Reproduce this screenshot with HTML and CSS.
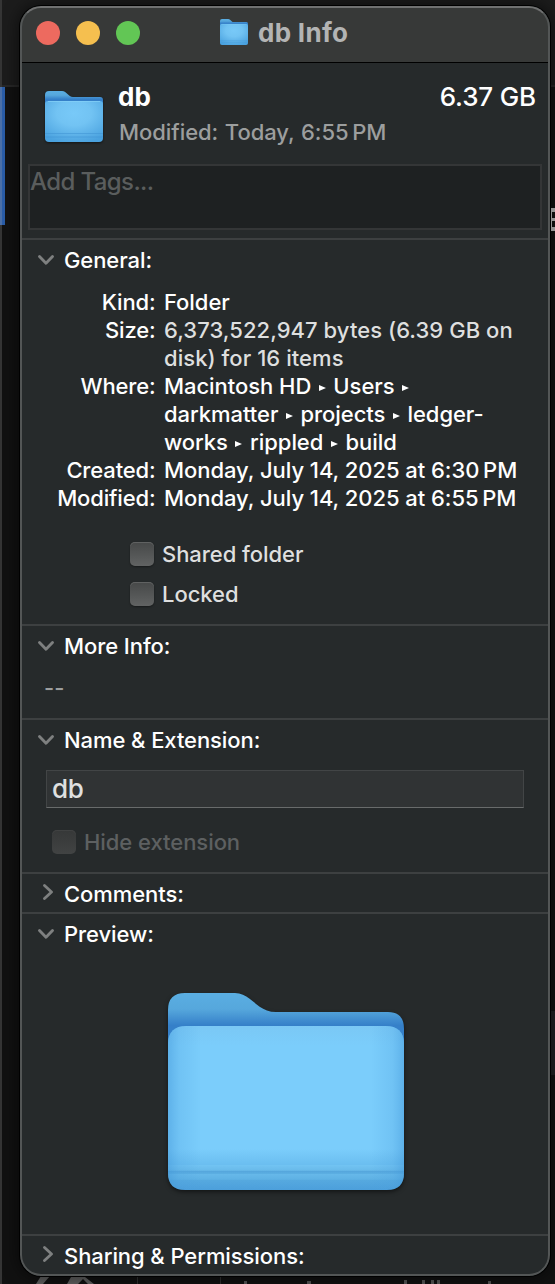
FILE: index.html
```html
<!DOCTYPE html>
<html lang="en">
<head>
<meta charset="utf-8">
<title>db Info</title>
<link rel="stylesheet" href="styles.css">
</head>
<body>
<svg class="defs" width="0" height="0">
  <defs>
    <linearGradient id="back" x1="0" y1="0" x2="0" y2="1">
      <stop offset="0" stop-color="#5aaee2"/><stop offset=".09" stop-color="#56a7dc"/><stop offset=".18" stop-color="#3580c9"/><stop offset="1" stop-color="#3580c9"/>
    </linearGradient>
    <linearGradient id="front" x1="0" y1="0" x2="0" y2="1">
      <stop offset="0" stop-color="#7ac8f5"/><stop offset=".12" stop-color="#7bcdfb"/><stop offset=".75" stop-color="#7bcdfb"/><stop offset=".845" stop-color="#6bbef0"/>
      <stop offset=".85" stop-color="#71c3f2"/><stop offset=".88" stop-color="#69baea"/><stop offset=".885" stop-color="#55a6dc"/><stop offset=".9" stop-color="#5baee2"/><stop offset=".905" stop-color="#66b8e9"/><stop offset=".935" stop-color="#5eb1e4"/><stop offset=".94" stop-color="#56a9df"/><stop offset="1" stop-color="#4c9fdb"/>
    </linearGradient>
    <linearGradient id="sides" x1="0" y1="0" x2="1" y2="0">
      <stop offset="0" stop-color="#3f95d8" stop-opacity=".5"/><stop offset=".05" stop-color="#4b9fde" stop-opacity=".22"/><stop offset=".14" stop-color="#4b9fde" stop-opacity="0"/><stop offset=".86" stop-color="#4b9fde" stop-opacity="0"/><stop offset=".95" stop-color="#4b9fde" stop-opacity=".22"/><stop offset="1" stop-color="#3f95d8" stop-opacity=".5"/>
    </linearGradient>
    <radialGradient id="small-front" cx=".5" cy=".3" r=".75">
      <stop offset="0" stop-color="#78c9f8"/><stop offset=".4" stop-color="#72c3f3"/><stop offset="1" stop-color="#4aa2df"/>
    </radialGradient>
    <symbol id="folder" viewBox="0 0 236 197" preserveAspectRatio="none">
      <path fill="url(#back)" d="M0 17Q0 0 17 0H67C83 0 89 19 108 19H220Q236 19 236 36V180H0Z"/>
      <path fill="url(#front)" d="M0 50Q1 33 18 33H218Q235 33 236 50V180Q236 197 219 197H17Q0 197 0 180Z"/>
      <path fill="url(#sides)" d="M0 50Q1 33 18 33H218Q235 33 236 50V180Q236 197 219 197H17Q0 197 0 180Z"/>
    </symbol>
    <symbol id="folder-small" viewBox="0 0 58 51" preserveAspectRatio="none">
      <path fill="url(#back)" d="M0 4Q0 0 4 0H17C22 0 23 6 28 6H55Q58 6 58 9V46H0Z"/>
      <path fill="url(#small-front)" d="M0 13Q0 10 3 10H55Q58 10 58 13V47Q58 51 54 51H4Q0 51 0 47Z"/>
      <path stroke="#86d1f8" stroke-opacity=".7" d="M3 10.500H55"/>
      <path stroke="#3f93d3" stroke-opacity=".55" d="M0 42.500H58M0 46H58"/>
    </symbol>
    <symbol id="down" viewBox="0 0 16 10"><path d="M1.500 1.500 8 8.300l6.500-6.800"/></symbol>
    <symbol id="right" viewBox="0 0 10 16"><path d="M1.500 1.500 8.500 8l-7 6.500"/></symbol>
  </defs>
</svg>
<div class="desktop">
  <div class="behind behind-top"></div>
  <div class="behind behind-edge"></div>
  <div class="behind behind-blue"></div>
  <div class="behind behind-scroll"></div>
  <svg class="behind behind-bottom" width="555" height="9" viewBox="0 0 555 9"><path fill="#606060" d="M36 9l5-8h9l-7 8zM67 9l4-7 8-1 6 1 9 7h-6l-5-5-5 5z"/><path stroke="#303030" d="M137.500 0v9M220.500 0v9"/><path fill="#555" d="M244 6h3v3h-3zM307 6h4v3h-4zM404 5h3v4h-3zM422 5h3v4h-3zM431 5h3v4h-3zM437 5h3v4h-3zM488 6h3v3h-3z"/></svg>
  <main class="window">
    <header class="titlebar">
      <span class="light red"></span><span class="light yellow"></span><span class="light green"></span>
      <svg class="title-icon"><use href="#folder-small"/></svg>
      <h1 class="title">db Info</h1>
    </header>
    <div class="summary">
      <svg class="summary-icon"><use href="#folder-small"/></svg>
      <div class="summary-text">
        <div class="summary-row"><strong class="name">db</strong><span class="total">6.37 GB</span></div>
        <div class="modified">Modified: Today, 6:55&#8239;PM</div>
      </div>
    </div>
    <div class="tags">Add Tags...</div>

    <section class="section general">
      <h2 class="heading"><svg class="chev down"><use href="#down"/></svg>General:</h2>
      <dl class="facts">
        <dt>Kind:</dt><dd class="kind">Folder</dd>
        <dt>Size:</dt><dd class="soft">6,373,522,947 bytes (6.39 GB on<br>disk) for 16 items</dd>
        <dt>Where:</dt><dd class="path">Macintosh HD <i class="tri"></i> Users <i class="tri"></i><br>darkmatter <i class="tri"></i> projects <i class="tri"></i> ledger-<br>works <i class="tri"></i> rippled <i class="tri"></i> build</dd>
        <dt>Created:</dt><dd class="date">Monday, July 14, 2025 at 6:30&#8239;PM</dd>
        <dt>Modified:</dt><dd class="date">Monday, July 14, 2025 at 6:55&#8239;PM</dd>
      </dl>
      <div class="checks">
        <label class="check"><span class="box"></span>Shared folder</label>
        <label class="check"><span class="box"></span>Locked</label>
      </div>
    </section>
    <section class="section more">
      <h2 class="heading"><svg class="chev down"><use href="#down"/></svg>More Info:</h2>
      <div class="none">--</div>
    </section>
    <section class="section extension">
      <h2 class="heading"><svg class="chev down"><use href="#down"/></svg>Name &amp; Extension:</h2>
      <div class="field">db</div>
      <label class="check disabled"><span class="box"></span>Hide extension</label>
    </section>
    <section class="section comments">
      <h2 class="heading"><svg class="chev right"><use href="#right"/></svg>Comments:</h2>
    </section>
    <section class="section preview">
      <h2 class="heading"><svg class="chev down"><use href="#down"/></svg>Preview:</h2>
      <svg class="preview-icon"><use href="#folder"/></svg>
    </section>
    <section class="section sharing">
      <h2 class="heading"><svg class="chev right"><use href="#right"/></svg>Sharing &amp; Permissions:</h2>
    </section>
  </main>
  <svg class="behind behind-list" width="5" height="23"><path fill="#929292" d="M0 0h5v4H0zM0 10h5v3H0zM0 19h5v4H0zM0 0h1v23H0z"/></svg>
</div>
</body>
</html>
```
FILE: styles.css
```css
* { box-sizing: border-box; }
body { margin: 0; background: #111; font-family: Inter, "Liberation Sans", sans-serif; font-size: 22px; line-height: 28px; color: #fff; }
.defs { position: absolute; }
.desktop { position: relative; width: 555px; height: 1284px; padding: 6px 0 0 20px; overflow: hidden; background: #111; }

.behind { position: absolute; }
.behind-top { left: 0; top: 0; width: 555px; height: 87px; background: #1c1c1c; border-bottom: 2px solid #272727; }
.behind-edge { left: 0; top: 0; width: 2px; height: 1284px; background: #353535; }
.behind-blue { left: 0; top: 87px; width: 5px; height: 138px; background: #2a5da8; border-left: 2px solid #4c70a8; }
.behind-list { left: 551px; top: 208px; }
.behind-scroll { left: 550px; top: 1011px; width: 5px; height: 64px; background: #222225; }
.behind-bottom { left: 0; top: 1275px; }

.window { position: relative; width: 530px; height: 1270px; border-radius: 21px; overflow: hidden; background: #262a2b; box-shadow: 0 0 0 1px #000, 0 0 16px 2px rgba(0,0,0,.55); }
.window::after { content: ""; position: absolute; inset: 0; border: 2px solid #535656; border-top-color: #707171; border-radius: 21px; pointer-events: none; }

.titlebar { display: flex; align-items: center; height: 57px; padding: 0 0 2px 16px; background: #373938; border-bottom: 1px solid #000; }
.light { width: 24px; height: 24px; margin-right: 16px; border-radius: 50%; }
.red { background: #ed6a5f; }
.yellow { background: #f5bf4f; }
.green { background: #62c655; }
.title-icon { width: 28px; height: 26px; margin: -2px 10px 0 64px; }
.title { margin: 0; font-size: 26px; font-weight: 700; color: #b3b4b4; letter-spacing: .3px; }

.summary { display: flex; height: 101px; padding: 18px 14px 0 25px; }
.summary-icon { width: 58px; height: 51px; margin: 10px 15px 0 0; filter: drop-shadow(0 1px 1px rgba(0,0,0,.5)); }
.summary-text { flex: 1; }
.summary-row { display: flex; justify-content: space-between; height: 37px; line-height: 32px; font-size: 26px; }
.name { font-weight: 700; }
.total { font-weight: 450; letter-spacing: -.15px; }
.modified { padding-left: 1px; color: #9c9e9e; font-weight: 450; word-spacing: .8px; letter-spacing: -.05px; }

.tags { width: 514px; height: 66px; margin: 0 0 8px 8px; padding: 2px 0 0; border: 2px solid #343637; background: #1e2122; color: #5a5d5d; font-size: 24px; font-weight: 450; letter-spacing: -.6px; }

.section { border-top: 2px solid #3d4041; }
.heading { display: flex; align-items: center; height: 28px; margin: 6px 0 0; padding-left: 44px; position: relative; font-size: 22px; font-weight: 500; letter-spacing: -.08px; }
.chev { position: absolute; fill: none; stroke: #7e8080; stroke-width: 2.8; stroke-linecap: round; stroke-linejoin: round; }
.chev.down { left: 18px; top: 9px; width: 16px; height: 10px; }
.chev.right { left: 23px; top: 4px; width: 10px; height: 16px; }

.general { height: 386px; }
.facts { display: grid; grid-template-columns: 135.5px 1fr; column-gap: 8.5px; margin: 14px 0 0; font-weight: 500; letter-spacing: -.05px; }
.facts dt { text-align: right; letter-spacing: -.15px; }
.facts dd { margin: 0; white-space: nowrap; }
.facts .soft { color: #dedfdf; font-weight: 450; letter-spacing: .05px; }
.tri { display: inline-block; margin: 0 2px 3px 1.5px; border-left: 7px solid #fff; border-top: 3.5px solid transparent; border-bottom: 3.5px solid transparent; }
.checks { padding: 22px 0 0 110px; }
.check { display: flex; align-items: center; height: 40px; gap: 8px; color: #dedfdf; font-weight: 450; letter-spacing: -.05px; }
.box { width: 24px; height: 24px; border-radius: 5px; background: linear-gradient(#464848, #616363); box-shadow: inset 0 1px #606262, 0 1px 2px rgba(0,0,0,.4); }

.more { height: 94px; }
.none { padding: 14px 0 0 24px; color: #9c9e9e; font-weight: 500; }

.extension { height: 154px; }
.field { width: 478px; height: 38px; margin: 16px 0 0 26px; padding: 0 5px; border: 1px solid #424546; border-bottom: 1px solid #686b6b; background: #303334; color: #dfe0e0; font-size: 26px; font-weight: 450; letter-spacing: -.3px; line-height: 36px; }
.disabled { margin: 14px 0 0 32px; color: #5d6061; }
.disabled .box { background: linear-gradient(#363838, #414343); box-shadow: inset 0 1px #404242; }

.comments { height: 40px; }
.preview { height: 322px; }
.preview-icon { display: block; width: 236px; height: 197px; margin: 45px 0 0 148px; filter: drop-shadow(0 2px 2px rgba(0,0,0,.5)); }
.sharing { height: 42px; }
```
